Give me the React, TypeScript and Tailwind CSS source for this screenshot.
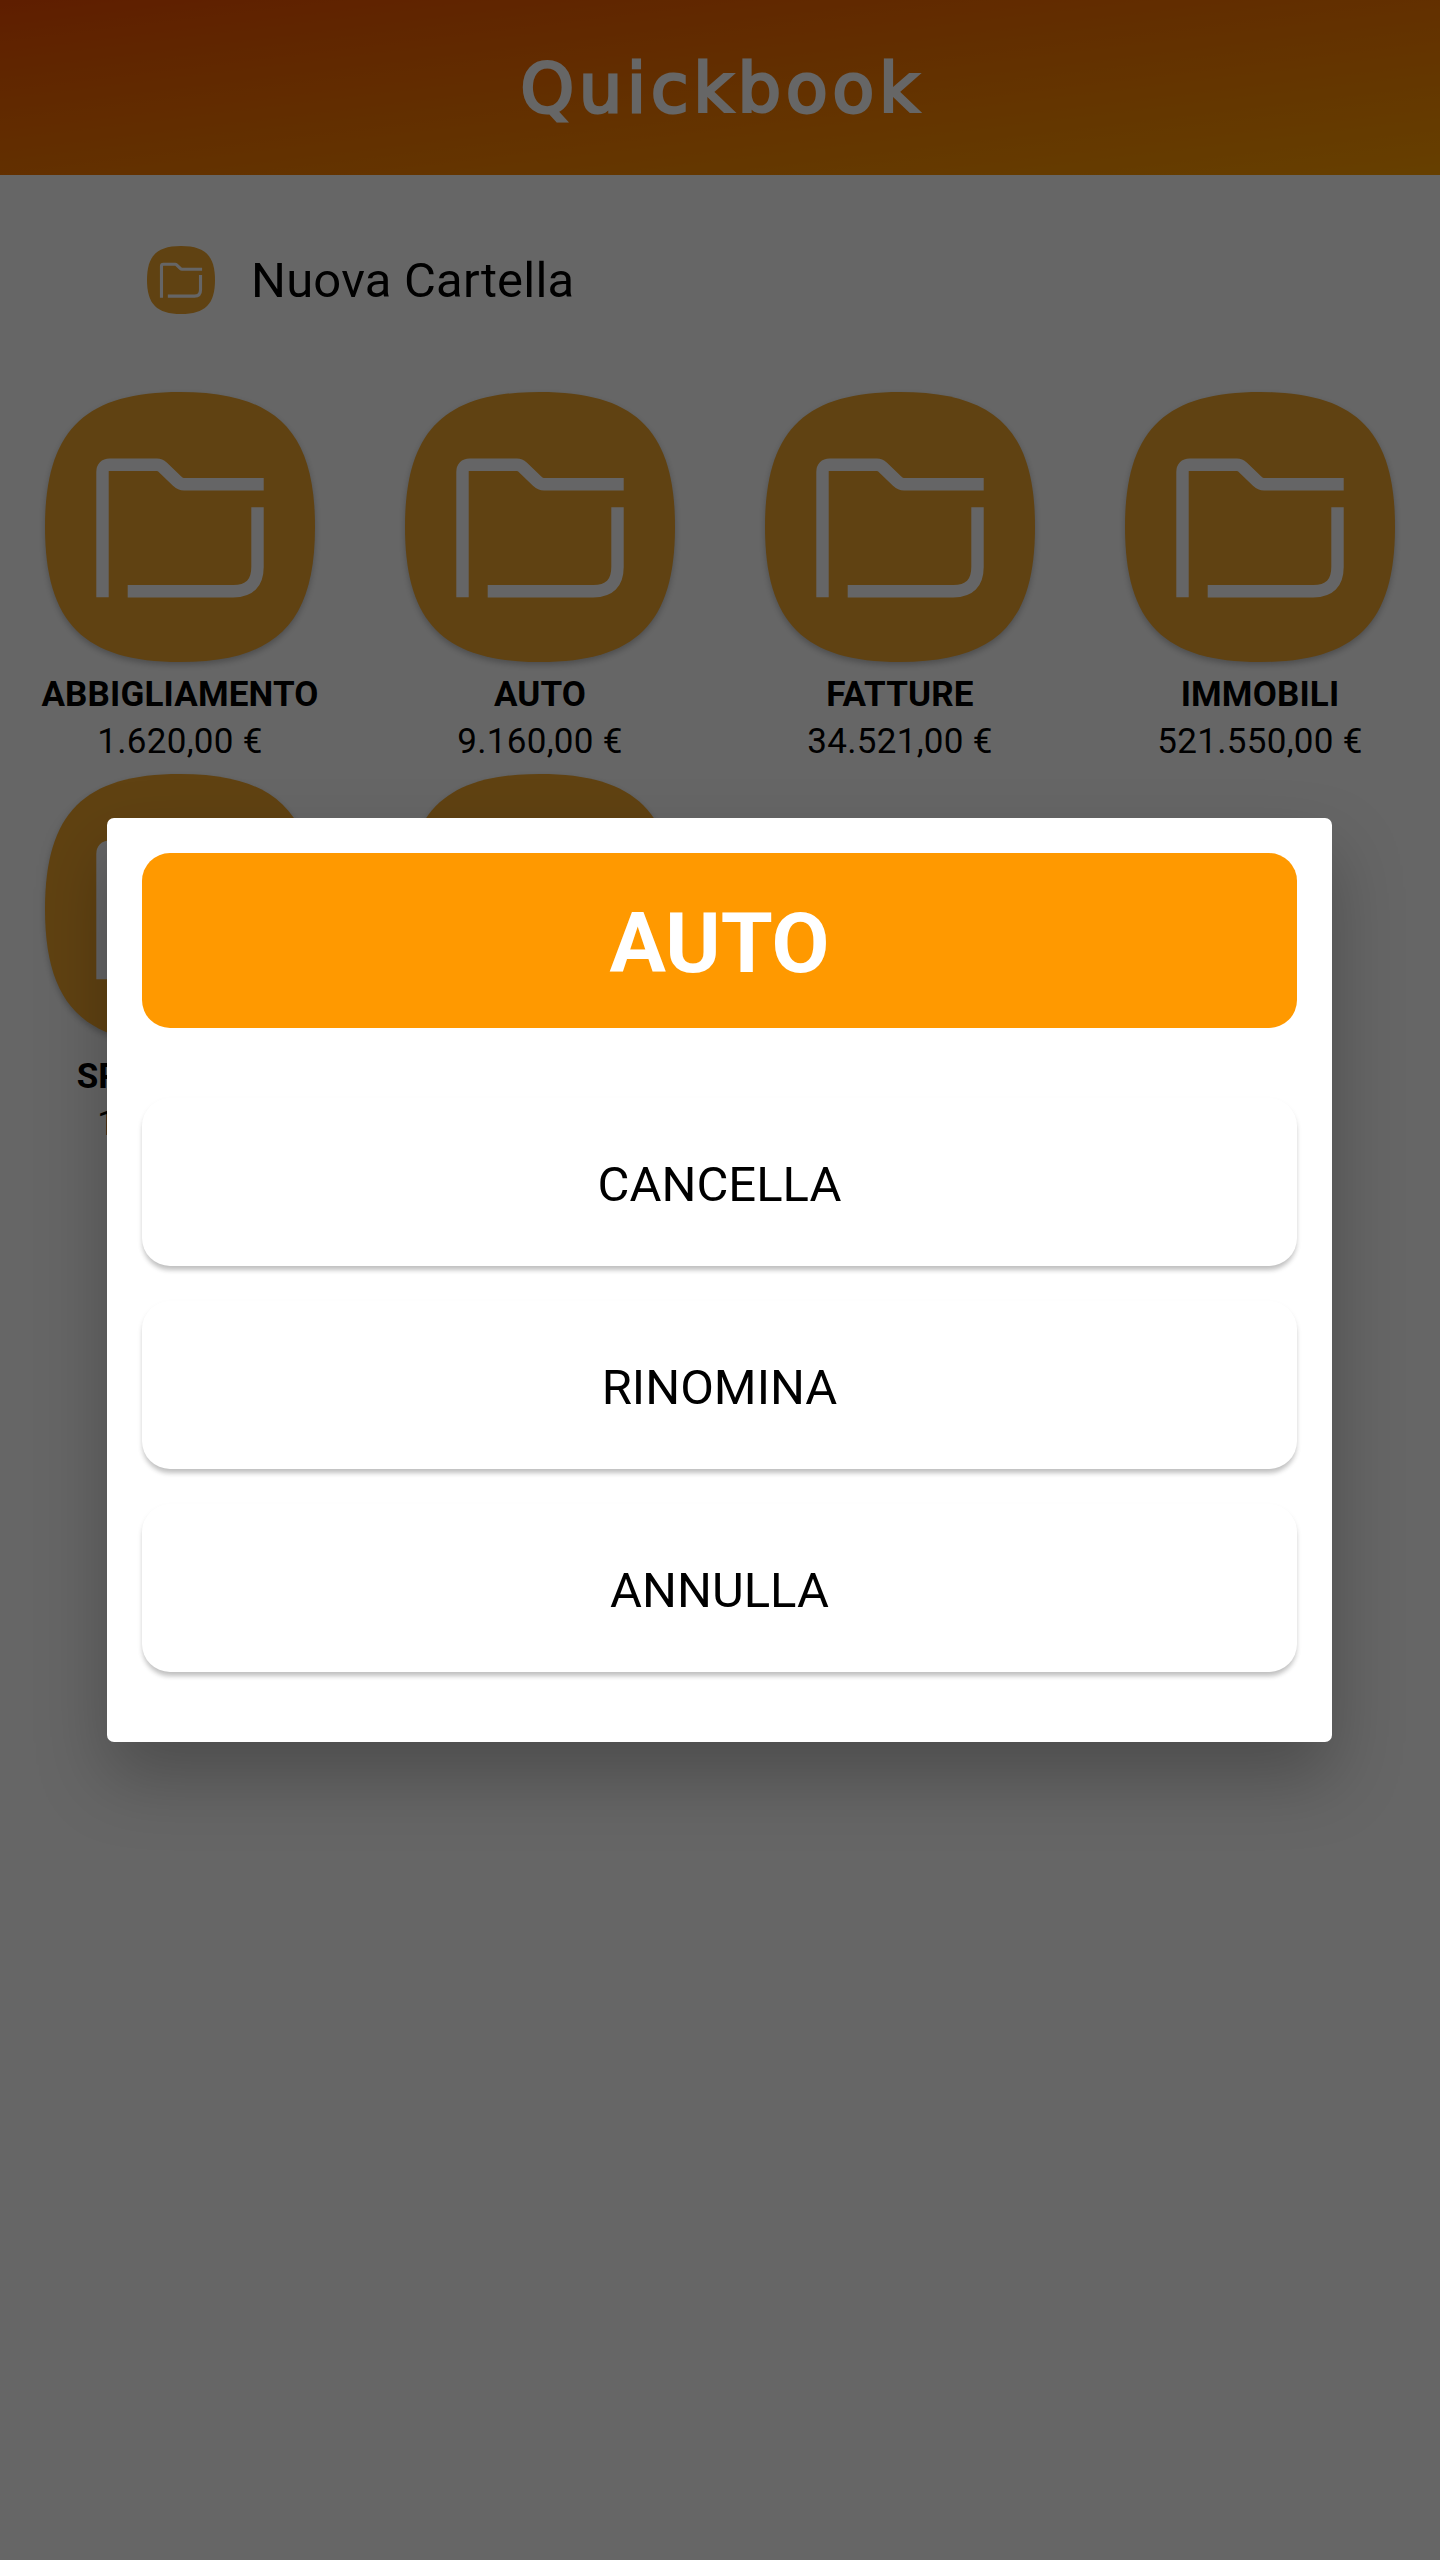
import { useState } from "react";
import type { SVGProps } from "react";
import { clsx } from "clsx";

interface Folder {
  id: string;
  name: string;
  total: number;
}

const FOLDERS: Folder[] = [
  { id: "abbigliamento", name: "ABBIGLIAMENTO", total: 1620 },
  { id: "auto", name: "AUTO", total: 9160 },
  { id: "fatture", name: "FATTURE", total: 34521 },
  { id: "immobili", name: "IMMOBILI", total: 521550 },
  { id: "spese-casa", name: "SPESE CASA", total: 1250 },
  { id: "viaggi", name: "VIAGGI", total: 2480 },
];

const ACTIONS = ["CANCELLA", "RINOMINA", "ANNULLA"];

// 9160 -> "9.160,00 €"
function formatEuro(value: number) {
  const [whole, cents] = value.toFixed(2).split(".");
  return `${whole.replace(/\B(?=(\d{3})+$)/g, ".")},${cents} €`;
}

function FolderIcon({ className, ...props }: SVGProps<SVGSVGElement>) {
  return (
    <svg
      viewBox="0 0 270 270"
      fill="none"
      aria-hidden="true"
      className={clsx("shrink-0 overflow-visible", className)}
      {...props}
    >
      <path
        d="M0 135C0 39 39 0 135 0S270 39 270 135 231 270 135 270 0 231 0 135Z"
        fill="#f0a52d"
      />
      <g stroke="#fdfdff" strokeWidth={12.4}>
        <path d="M57.5 205.3V80q0-7.3 7.3-7.3H112q3 0 5.5 2.3L132 89q3.5 3.3 7 3.3H218.7" />
        <path d="M212.5 115.3V175q0 24.2-24.2 24.2H82.7" />
      </g>
    </svg>
  );
}

function Header() {
  return (
    <header className="flex h-[175px] items-center justify-center bg-linear-to-br from-[#ec4b00] to-[#ff9f00]">
      <h1 className="pt-0.5 pl-1 font-['DejaVu_Sans',sans-serif] text-[68px] leading-none tracking-[5px] text-white [-webkit-text-stroke:3px_white]">
        Quickbook
      </h1>
    </header>
  );
}

function FolderTile({ folder }: { folder: Folder }) {
  return (
    <button type="button" className="flex flex-col items-center">
      <FolderIcon className="size-[270px] drop-shadow-[0_3px_3px_rgba(0,0,0,0.25)]" />
      <span className="mt-[9px] text-[35px] leading-[47px] font-bold tracking-[0.15px]">
        {folder.name}
      </span>
      <span className="text-[35px] leading-[47px] tracking-[0.3px]">
        {formatEuro(folder.total)}
      </span>
    </button>
  );
}

interface FolderDialogProps {
  title: string;
  onSelect: (action: string) => void;
}

function FolderDialog({ title, onSelect }: FolderDialogProps) {
  return (
    <div className="absolute inset-0 flex items-center justify-center bg-black/60 pr-px">
      <div
        role="dialog"
        aria-label={title}
        className="flex w-[1225px] flex-col rounded-[7px] bg-white px-[35px] pt-[35px] pb-[70px] shadow-[0_35px_70px_rgba(0,0,0,0.25)]"
      >
        <h2 className="flex h-[175px] items-center justify-center rounded-[28px] bg-[#ff9900] pt-1.5 text-[84px] font-bold text-white">
          {title}
        </h2>
        <div className="mt-[70px] flex flex-col gap-[35px]">
          {ACTIONS.map((action) => (
            <button
              key={action}
              type="button"
              onClick={() => onSelect(action)}
              className="flex h-[168px] items-center justify-center rounded-[28px] bg-white pt-1.5 text-[49px] shadow-[0_5px_5px_-1px_rgba(0,0,0,0.22),0_3px_6px_rgba(0,0,0,0.05)]"
            >
              {action}
            </button>
          ))}
        </div>
      </div>
    </div>
  );
}

export default function App() {
  const [selected, setSelected] = useState<Folder | null>(FOLDERS[1]);

  return (
    <div className="relative h-[2560px] w-[1440px] overflow-hidden bg-white font-[Roboto,sans-serif] text-black">
      <Header />

      <main>
        <button
          type="button"
          className="mt-[71px] ml-[147px] flex items-center gap-[36px]"
        >
          <FolderIcon className="size-[68px]" />
          <span className="pt-0.5 text-[49px] leading-[64px] tracking-[0.2px]">
            Nuova Cartella
          </span>
        </button>

        <div className="mt-[78px] grid grid-cols-4 gap-y-[9px]">
          {FOLDERS.map((folder) => (
            <FolderTile key={folder.id} folder={folder} />
          ))}
        </div>
      </main>

      {selected && (
        <FolderDialog
          title={selected.name}
          onSelect={() => setSelected(null)}
        />
      )}
    </div>
  );
}
